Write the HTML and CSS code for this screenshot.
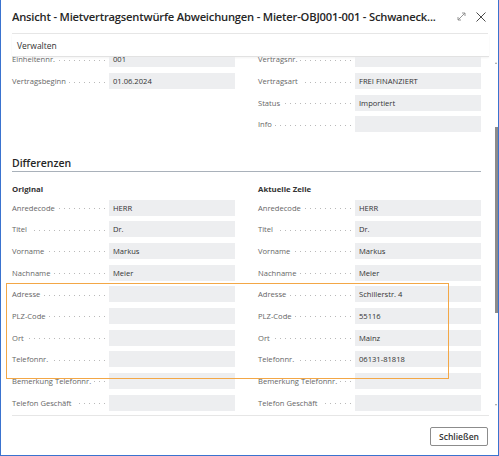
FILE: index.html
```html
<!DOCTYPE html>
<html lang="de">
<head>
<meta charset="utf-8">
<title>Ansicht - Mietvertragsentwürfe Abweichungen</title>
<link rel="stylesheet" href="styles.css">
</head>
<body>
<div class="dialog">
  <div class="titlebar">
    <div class="title">Ansicht - Mietvertragsentwürfe Abweichungen - Mieter-OBJ001-001 - Schwaneck...</div>
    <div class="title-actions">
      <svg class="icon" width="9" height="9" viewBox="0 0 9 9" aria-hidden="true">
        <path d="M1 8 L8 1 M5 1 H8 V4 M1 5 V8 H4" fill="none" stroke="#8a8a8a" stroke-width="0.9"/>
      </svg>
      <svg class="icon" width="10" height="10" viewBox="0 0 10 10" aria-hidden="true">
        <path d="M0.5 0.5 L9.5 9.5 M9.5 0.5 L0.5 9.5" fill="none" stroke="#4a4a4a" stroke-width="1"/>
      </svg>
    </div>
  </div>
  <div class="actionbar"><span>Verwalten</span></div>
  <div class="scroll">
    <div class="scroll-inner">
      <div class="general">
        <div class="col">
          <div class="field"><div class="label"><span>Einheitennr.</span></div><div class="value">001</div></div>
          <div class="field"><div class="label"><span>Vertragsbeginn</span></div><div class="value">01.06.2024</div></div>
        </div>
        <div class="col">
          <div class="field"><div class="label"><span>Vertragsnr.</span></div><div class="value"></div></div>
          <div class="field"><div class="label"><span>Vertragsart</span></div><div class="value">FREI FINANZIERT</div></div>
          <div class="field"><div class="label"><span>Status</span></div><div class="value">Importiert</div></div>
          <div class="field"><div class="label"><span>Info</span></div><div class="value"></div></div>
        </div>
      </div>
      <div class="section-title">Differenzen</div>
      <div class="diff">
        <div class="col">
          <div class="col-title">Original</div>
          <div class="field"><div class="label"><span>Anredecode</span></div><div class="value">HERR</div></div>
          <div class="field"><div class="label"><span>Titel</span></div><div class="value">Dr.</div></div>
          <div class="field"><div class="label"><span>Vorname</span></div><div class="value">Markus</div></div>
          <div class="field"><div class="label"><span>Nachname</span></div><div class="value">Meier</div></div>
          <div class="field"><div class="label"><span>Adresse</span></div><div class="value"></div></div>
          <div class="field"><div class="label"><span>PLZ-Code</span></div><div class="value"></div></div>
          <div class="field"><div class="label"><span>Ort</span></div><div class="value"></div></div>
          <div class="field"><div class="label"><span>Telefonnr.</span></div><div class="value"></div></div>
          <div class="field"><div class="label"><span>Bemerkung Telefonnr.</span></div><div class="value"></div></div>
          <div class="field"><div class="label"><span>Telefon Geschäft</span></div><div class="value"></div></div>
        </div>
        <div class="col">
          <div class="col-title">Aktuelle Zeile</div>
          <div class="field"><div class="label"><span>Anredecode</span></div><div class="value">HERR</div></div>
          <div class="field"><div class="label"><span>Titel</span></div><div class="value">Dr.</div></div>
          <div class="field"><div class="label"><span>Vorname</span></div><div class="value">Markus</div></div>
          <div class="field"><div class="label"><span>Nachname</span></div><div class="value">Meier</div></div>
          <div class="field"><div class="label"><span>Adresse</span></div><div class="value">Schillerstr. 4</div></div>
          <div class="field"><div class="label"><span>PLZ-Code</span></div><div class="value">55116</div></div>
          <div class="field"><div class="label"><span>Ort</span></div><div class="value">Mainz</div></div>
          <div class="field"><div class="label"><span>Telefonnr.</span></div><div class="value">06131-81818</div></div>
          <div class="field"><div class="label"><span>Bemerkung Telefonnr.</span></div><div class="value"></div></div>
          <div class="field"><div class="label"><span>Telefon Geschäft</span></div><div class="value"></div></div>
        </div>
        <div class="highlight"></div>
      </div>
    </div>
  </div>
  <div class="footer"><button class="btn" type="button">Schließen</button></div>
  <div class="scroll-arrow up"></div>
  <div class="scroll-thumb"></div>
  <div class="scroll-arrow down"></div>
</div>
</body>
</html>
```
FILE: styles.css
```css
html, body {
  margin: 0;
  padding: 0;
  background: #ffffff;
}

body {
  font-family: "Open Sans", "Noto Sans", sans-serif;
  color: #333333;
}

.dialog {
  width: 499px;
  height: 456px;
  box-sizing: border-box;
  border: 1px solid #3a73cf;
  border-top: none;
  display: flex;
  flex-direction: column;
  position: relative;
  overflow: hidden;
  background: #ffffff;
}

.titlebar {
  height: 33px;
  flex: none;
  margin: 0 10px 0 11px;
  border-bottom: 1px solid #e6e6e6;
  display: flex;
  align-items: center;
}

.title {
  flex: 1;
  min-width: 0;
  font-size: 11.2px;
  letter-spacing: -0.2px;
  font-weight: 600;
  color: #262626;
  white-space: nowrap;
  overflow: hidden;
}

.title-actions {
  display: flex;
  align-items: center;
  gap: 10px;
  margin-right: 2px;
  margin-left: 6px;
}

.icon {
  display: block;
}

.actionbar {
  height: 22px;
  flex: none;
  margin: 0 9px 0 11px;
  padding-left: 5px;
  border-bottom: 1px solid #e2e2e2;
  box-shadow: 0 1px 2px rgba(0, 0, 0, 0.05);
  display: flex;
  align-items: center;
  font-size: 8.5px;
  color: #333333;
}

.scroll {
  flex: 1;
  overflow: hidden;
  position: relative;
}

.scroll-inner {
  margin-top: -5.67px;
  padding-left: 11px;
}

.general,
.diff {
  display: flex;
  gap: 23px;
}

.col {
  width: 223px;
  display: flex;
  flex-direction: column;
  gap: 5.67px;
}

.field {
  display: flex;
  align-items: center;
  height: 16px;
}

.label {
  width: 93px;
  margin-right: 4px;
  display: flex;
  align-items: center;
  font-size: 7.6px;
  color: #666666;
}

.label span {
  white-space: nowrap;
}

.label::after {
  content: "";
  flex: 1;
  height: 1px;
  margin-left: 3px;
  margin-top: 2px;
  background: repeating-linear-gradient(to left, #b9b9b9 0 1px, transparent 1px 5px);
}

.value {
  width: 126px;
  height: 16px;
  box-sizing: border-box;
  padding-left: 4px;
  background: #edeef0;
  display: flex;
  align-items: center;
  font-size: 7.6px;
  color: #333333;
  white-space: nowrap;
}

.section-title {
  width: 469px;
  margin-top: 23.67px;
  height: 15px;
  line-height: 15px;
  border-bottom: 1px solid #a9b1ba;
  font-size: 10.5px;
  font-weight: 600;
  color: #262626;
}

.diff {
  margin-top: 12px;
  position: relative;
}

.col-title {
  height: 10px;
  line-height: 10px;
  font-size: 7.8px;
  font-weight: 700;
  color: #333333;
}

.highlight {
  position: absolute;
  left: -6px;
  top: 99px;
  width: 443px;
  height: 96px;
  box-sizing: border-box;
  border: 1.5px solid #f3a746;
  pointer-events: none;
}

.footer {
  height: 40px;
  flex: none;
  box-sizing: border-box;
  margin: 0 9px 0 11px;
  padding-top: 11px;
  border-top: 1px solid #e6e6e6;
  display: flex;
  justify-content: flex-end;
  align-items: flex-start;
}

.btn {
  width: 58px;
  height: 19px;
  margin-right: 1px;
  padding: 0;
  border: 1px solid #8c8c8c;
  border-radius: 2px;
  background: #ffffff;
  font-family: "Open Sans", "Noto Sans", sans-serif;
  font-size: 8.5px;
  font-weight: 600;
  color: #333333;
}

.scroll-thumb {
  position: absolute;
  left: 494px;
  top: 127px;
  width: 3px;
  height: 186px;
  background: #8b8b8b;
}

.scroll-arrow {
  position: absolute;
  left: 494px;
  width: 0;
  height: 0;
  border-left: 1.5px solid transparent;
  border-right: 1.5px solid transparent;
}

.scroll-arrow.up {
  top: 62px;
  border-bottom: 2px solid #9a9a9a;
}

.scroll-arrow.down {
  top: 404px;
  border-top: 2px solid #9a9a9a;
}
```
